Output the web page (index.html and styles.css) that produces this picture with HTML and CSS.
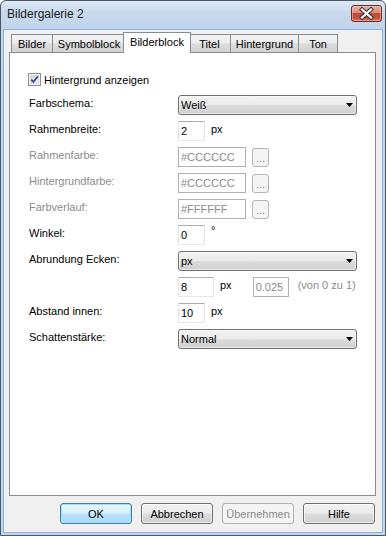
FILE: index.html
```html
<!DOCTYPE html>
<html lang="de">
<head>
<meta charset="utf-8">
<title>Bildergalerie 2</title>
<link rel="stylesheet" href="styles.css">
</head>
<body>
<div class="window">
  <div class="titlebar">
    <span class="title">Bildergalerie 2</span>
    <div class="close">
      <svg width="29" height="15" viewBox="0 0 29 15">
        <path d="M10 3.5 L19 11.5 M19 3.5 L10 11.5" stroke="#3b3535" stroke-width="4.2" stroke-linecap="square" fill="none"/>
        <path d="M10 3.5 L19 11.5 M19 3.5 L10 11.5" stroke="#ffffff" stroke-width="2.2" stroke-linecap="square" fill="none"/>
      </svg>
    </div>
  </div>
  <div class="client">
    <div class="tabs">
      <div class="tab w-bilder">Bilder</div>
      <div class="tab w-symbol">Symbolblock</div>
      <div class="tab active w-block">Bilderblock</div>
      <div class="tab w-titel">Titel</div>
      <div class="tab w-hinter">Hintergrund</div>
      <div class="tab w-ton">Ton</div>
    </div>
    <div class="panel">
      <div class="check">
        <svg class="box" width="13" height="13" viewBox="0 0 13 13">
          <defs>
            <linearGradient id="cb" x1="0" y1="0" x2="1" y2="1">
              <stop offset="0" stop-color="#cbcfd5"/>
              <stop offset="1" stop-color="#f7f7f7"/>
            </linearGradient>
          </defs>
          <rect x="0.5" y="0.5" width="12" height="12" fill="#f4f4f4" stroke="#8e8f8f"/>
          <rect x="2.5" y="2.5" width="8" height="8" fill="url(#cb)" stroke="#d6d8db"/>
          <path d="M3.2 6.6 L5.4 8.9 L9.9 3.4" stroke="#3a4d8f" stroke-width="1.7" fill="none"/>
        </svg>
        <span>Hintergrund anzeigen</span>
      </div>
      <div class="form">
        <div class="lbl">Farbschema:</div>
        <div class="ctl"><div class="select"><span>Weiß</span><svg class="arrow" width="7" height="4" viewBox="0 0 7 4"><path d="M0 0 H7 L3.5 4 Z" fill="#000"/></svg></div></div>

        <div class="lbl">Rahmenbreite:</div>
        <div class="ctl"><div class="input w-s">2</div><span class="unit">px</span></div>

        <div class="lbl dis">Rahmenfarbe:</div>
        <div class="ctl"><div class="input dis w-c">#CCCCCC</div><div class="dots">...</div></div>

        <div class="lbl dis">Hintergrundfarbe:</div>
        <div class="ctl"><div class="input dis w-c">#CCCCCC</div><div class="dots">...</div></div>

        <div class="lbl dis">Farbverlauf:</div>
        <div class="ctl"><div class="input dis w-c">#FFFFFF</div><div class="dots">...</div></div>

        <div class="lbl">Winkel:</div>
        <div class="ctl"><div class="input w-s">0</div><span class="unit deg">°</span></div>

        <div class="lbl">Abrundung Ecken:</div>
        <div class="ctl"><div class="select"><span>px</span><svg class="arrow" width="7" height="4" viewBox="0 0 7 4"><path d="M0 0 H7 L3.5 4 Z" fill="#000"/></svg></div></div>

        <div class="lbl"></div>
        <div class="ctl"><div class="input w-m">8</div><span class="unit u-wide">px</span><div class="input dis w-m">0.025</div><span class="note">(von 0 zu 1)</span></div>

        <div class="lbl">Abstand innen:</div>
        <div class="ctl"><div class="input w-s">10</div><span class="unit">px</span></div>

        <div class="lbl">Schattenstärke:</div>
        <div class="ctl"><div class="select"><span>Normal</span><svg class="arrow" width="7" height="4" viewBox="0 0 7 4"><path d="M0 0 H7 L3.5 4 Z" fill="#000"/></svg></div></div>
      </div>
    </div>
    <div class="buttons">
      <div class="btn default">OK</div>
      <div class="btn">Abbrechen</div>
      <div class="btn disabled">Übernehmen</div>
      <div class="btn">Hilfe</div>
    </div>
  </div>
</div>
</body>
</html>
```
FILE: styles.css
```css
* { box-sizing: border-box; }
html, body { margin: 0; padding: 0; background: #ffffff; }
body {
  width: 386px;
  height: 536px;
  font-family: "Liberation Sans", Arial, sans-serif;
  font-size: 11px;
  color: #000;
}

.window {
  width: 386px;
  height: 536px;
  border: 1px solid #4f5866;
  border-radius: 6px 6px 0 0;
  background: linear-gradient(to bottom, #dce8f5 0, #c8d9ee 12px, #c0d4eb 28px, #c4d7ed 29px, #c4d7ed 100%);
  display: flex;
  flex-direction: column;
  padding: 0 2px 2px 2px;
}

.titlebar {
  height: 28px;
  display: flex;
  justify-content: space-between;
  align-items: flex-start;
  padding: 0 1px 0 4px;
}
.title {
  font-size: 12px;
  line-height: 27px;
  color: #1b1b1b;
}
.close {
  margin-top: 4px;
  width: 31px;
  height: 17px;
  border: 1px solid #6a2b26;
  border-radius: 3px;
  background: linear-gradient(to bottom, #eab1a4 0, #d98a7a 45%, #c4493b 50%, #c7503f 80%, #d97a62 100%);
  display: flex;
  box-shadow: inset 0 0 0 1px rgba(255, 220, 210, 0.45);
}

.client {
  flex: 1;
  border: 1px solid #86b3df;
  background: #f0f0f0;
  display: flex;
  flex-direction: column;
  padding: 2px 0 8px 0;
}

.tabs {
  display: flex;
  align-items: flex-end;
  height: 20px;
  padding-left: 7px;
}
.tab {
  height: 18px;
  border: 1px solid #898c95;
  border-bottom: none;
  background: linear-gradient(to bottom, #f3f3f3 0, #ebebeb 48%, #dddddd 52%, #d2d2d2 100%);
  display: flex;
  align-items: center;
  justify-content: center;
  margin-left: -1px;
  white-space: nowrap;
}
.tab:first-child { margin-left: 0; }
.tab.active {
  height: 21px;
  background: #ffffff;
  position: relative;
  top: 1px;
  z-index: 1;
  margin-left: -3px;
  margin-right: -2px;
  padding-bottom: 2px;
}
.w-bilder { width: 42px; }
.w-symbol { width: 74px; }
.w-block { width: 68px; }
.w-titel { width: 43px; }
.w-hinter { width: 69px; }
.w-ton { width: 40px; }

.panel {
  flex: 1;
  margin: 0 6px 0 5px;
  border: 1px solid #898c95;
  background: #ffffff;
  padding: 20px 0 0 19px;
}

.check {
  display: flex;
  align-items: center;
  gap: 3px;
  height: 13px;
  margin-left: -1px;
}
.box { display: block; }

.form {
  margin-top: 9px;
  display: grid;
  grid-template-columns: 149px auto;
  grid-auto-rows: 20px;
  row-gap: 6px;
}
.lbl {
  line-height: 16px;
  white-space: nowrap;
}
.dis { color: #8b8b8b; }

.ctl {
  display: flex;
  align-items: flex-start;
}

.select {
  width: 179px;
  height: 20px;
  border: 1px solid #707070;
  border-radius: 3px;
  background: linear-gradient(to bottom, #f2f2f2 0, #ebebeb 48%, #dddddd 52%, #cfcfcf 100%);
  box-shadow: inset 0 0 0 1px rgba(255, 255, 255, 0.55);
  display: flex;
  align-items: center;
  justify-content: space-between;
  padding: 0 3px 0 2px;
}
.arrow { display: block; }

.input {
  height: 20px;
  border: 1px solid;
  border-color: #abadb3 #e2e3ea #e3e9ef #e2e3ea;
  background: #ffffff;
  padding: 0 2px;
  line-height: 18px;
  white-space: nowrap;
}
.input.dis {
  border-color: #afb2b5;
  color: #8b8b8b;
}
.w-s { width: 27px; }
.w-c { width: 68px; }
.w-m { width: 36px; }

.unit {
  margin-left: 6px;
  line-height: 17px;
}
.unit.deg { line-height: 11px; }
.u-wide { margin-right: 21px; }

.note {
  margin-left: 9px;
  line-height: 17px;
  color: #8b8b8b;
  white-space: nowrap;
}

.dots {
  margin-left: 6px;
  margin-top: 1px;
  width: 17px;
  height: 19px;
  border: 1px solid #b3b6b9;
  border-radius: 3px;
  background: #f4f4f4;
  color: #8b8b8b;
  font-size: 11px;
  line-height: 19px;
  text-align: center;
  overflow: hidden;
}

.buttons {
  display: flex;
  justify-content: flex-end;
  gap: 9px;
  margin-top: 7px;
  padding-right: 7px;
}
.btn {
  width: 72px;
  height: 21px;
  border: 1px solid #707070;
  border-radius: 3px;
  background: linear-gradient(to bottom, #f2f2f2 0, #ebebeb 48%, #dddddd 52%, #cfcfcf 100%);
  box-shadow: inset 0 0 0 1px rgba(255, 255, 255, 0.6);
  display: flex;
  align-items: center;
  justify-content: center;
  white-space: nowrap;
}
.btn.default {
  border-color: #3c7fb1;
  background: linear-gradient(to bottom, #eaf6fd 0, #d9f0fc 48%, #bee6fd 52%, #a7d9f5 100%);
  box-shadow: inset 0 0 0 1px #9fe0fb;
}
.btn.disabled {
  border-color: #adb2b5;
  background: #f4f4f4;
  box-shadow: none;
  color: #8b8b8b;
}
```
